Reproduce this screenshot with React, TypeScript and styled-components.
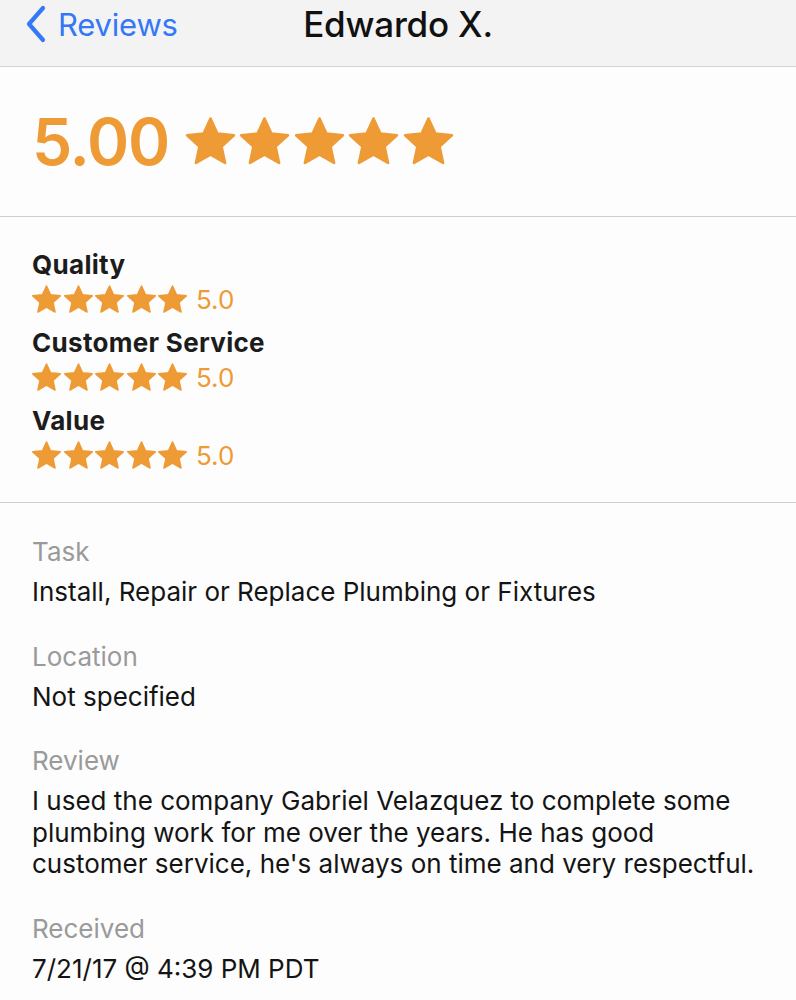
import styled, { createGlobalStyle } from "styled-components";

const GlobalStyle = createGlobalStyle`
  html, body {
    margin: 0;
    padding: 0;
    background: #fdfdfd;
  }
  body {
    font-family: Inter, "Noto Sans", "Liberation Sans", sans-serif;
    -webkit-font-smoothing: antialiased;
  }
`;

const ORANGE = "#ee9a35";

const Star = ({ size }: { size: number }) => (
  <svg width={size} height={size} viewBox="0 0 24 24">
    <polygon
      points="12,1.6 15.1,8.4 22.6,9.2 17,14.3 18.6,21.7 12,17.9 5.4,21.7 7,14.3 1.4,9.2 8.9,8.4"
      fill={ORANGE}
      stroke={ORANGE}
      strokeWidth={1.2}
      strokeLinejoin="round"
    />
  </svg>
);

const Stars = ({ size, gap }: { size: number; gap: number }) => (
  <StarRow gap={gap}>
    {[0, 1, 2, 3, 4].map((i) => (
      <Star key={i} size={size} />
    ))}
  </StarRow>
);

export default function App() {
  const ratings = ["Quality", "Customer Service", "Value"];
  const details = [
    { label: "Task", value: "Install, Repair or Replace Plumbing or Fixtures" },
    { label: "Location", value: "Not specified" },
    {
      label: "Review",
      value:
        "I used the company Gabriel Velazquez to complete some plumbing work for me over the years. He has good customer service, he's always on time and very respectful.",
    },
    { label: "Received", value: "7/21/17 @ 4:39 PM PDT" },
  ];

  return (
    <Page>
      <GlobalStyle />
      <NavBar>
        <BackButton>
          <svg width="24" height="40" viewBox="0 0 24 40">
            <path
              d="M19 4 L5 20 L19 36"
              fill="none"
              stroke="#3478f6"
              strokeWidth="4.2"
              strokeLinecap="round"
              strokeLinejoin="round"
            />
          </svg>
          <BackLabel>Reviews</BackLabel>
        </BackButton>
        <Title>Edwardo X.</Title>
      </NavBar>

      <Overall>
        <BigScore>5.00</BigScore>
        <Stars size={53} gap={1.5} />
      </Overall>

      <Ratings>
        {ratings.map((r) => (
          <RatingItem key={r}>
            <RatingLabel>{r}</RatingLabel>
            <RatingLine>
              <Stars size={31} gap={0.5} />
              <SmallScore>5.0</SmallScore>
            </RatingLine>
          </RatingItem>
        ))}
      </Ratings>

      <Details>
        {details.map((d) => (
          <DetailItem key={d.label}>
            <DetailLabel>{d.label}</DetailLabel>
            <DetailValue>{d.value}</DetailValue>
          </DetailItem>
        ))}
      </Details>
    </Page>
  );
}

const Page = styled.div`
  width: 796px;
  min-height: 1000px;
  background: #fdfdfd;
  overflow: hidden;
`;

const NavBar = styled.div`
  position: relative;
  height: 67px;
  box-sizing: border-box;
  background: #f3f3f3;
  border-bottom: 1px solid #d2d2d2;
  display: flex;
  align-items: center;
  justify-content: center;
`;

const BackButton = styled.div`
  position: absolute;
  left: 24px;
  top: 4px;
  display: flex;
  align-items: center;
  gap: 10px;
`;

const BackLabel = styled.span`
  color: #3478f6;
  font-size: 31px;
  letter-spacing: -0.2px;
`;

const Title = styled.div`
  margin-top: -18px;
  font-size: 35px;
  font-weight: 500;
  color: #111;
  letter-spacing: -0.2px;
`;

const Overall = styled.div`
  height: 150px;
  box-sizing: border-box;
  padding: 0 32px;
  display: flex;
  align-items: center;
  gap: 15px;
  border-bottom: 1.5px solid #cfcfcf;
`;

const BigScore = styled.div`
  font-size: 64px;
  font-weight: 600;
  color: ${ORANGE};
  letter-spacing: -1.2px;
`;

const StarRow = styled.div<{ gap: number }>`
  display: flex;
  gap: ${(p) => p.gap}px;
`;

const Ratings = styled.div`
  padding: 32px 31px 31px;
  display: flex;
  flex-direction: column;
  gap: 12px;
  border-bottom: 1.5px solid #cfcfcf;
`;

const RatingItem = styled.div`
  display: flex;
  flex-direction: column;
  gap: 3px;
`;

const RatingLabel = styled.div`
  padding-left: 1px;
  font-size: 26px;
  font-weight: 700;
  color: #1c1c1c;
  line-height: 32px;
  letter-spacing: 0.3px;
`;

const RatingLine = styled.div`
  display: flex;
  align-items: center;
  gap: 8px;
`;

const SmallScore = styled.span`
  font-size: 26px;
  color: ${ORANGE};
  line-height: 30px;
`;

const Details = styled.div`
  padding: 33px 32px 0;
  display: flex;
  flex-direction: column;
  gap: 33px;
`;

const DetailItem = styled.div`
  display: flex;
  flex-direction: column;
  gap: 8px;
`;

const DetailLabel = styled.div`
  font-size: 26px;
  color: #9a9a9a;
  line-height: 32px;
`;

const DetailValue = styled.div`
  max-width: 735px;
  font-size: 26px;
  color: #141414;
  line-height: 31.5px;
`;
